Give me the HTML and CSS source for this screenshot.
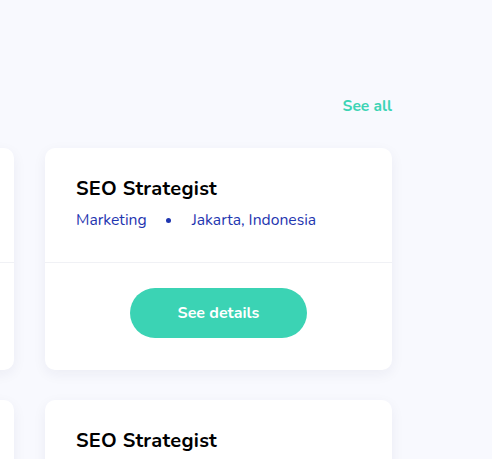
FILE: index.html
```html
<!DOCTYPE html>
<html>
<head>
<meta charset="utf-8">
<link rel="stylesheet" href="styles.css">
</head>
<body>
<section class="jobs">
  <div class="jobs-head">
    <a class="see-all" href="#">See all</a>
  </div>
  <div class="row">
    <div class="card">
      <div class="card-top">
        <h3 class="card-title">SEO Strategist</h3>
        <div class="card-meta"><span>Marketing</span><span class="dot"></span><span>Jakarta, Indonesia</span></div>
      </div>
      <div class="card-bottom"><a class="btn" href="#">See details</a></div>
    </div>
    <div class="card">
      <div class="card-top">
        <h3 class="card-title">SEO Strategist</h3>
        <div class="card-meta"><span>Marketing</span><span class="dot"></span><span>Jakarta, Indonesia</span></div>
      </div>
      <div class="card-bottom"><a class="btn" href="#">See details</a></div>
    </div>
  </div>
  <div class="row">
    <div class="card">
      <div class="card-top">
        <h3 class="card-title">SEO Strategist</h3>
        <div class="card-meta"><span>Marketing</span><span class="dot"></span><span>Jakarta, Indonesia</span></div>
      </div>
      <div class="card-bottom"><a class="btn" href="#">See details</a></div>
    </div>
    <div class="card">
      <div class="card-top">
        <h3 class="card-title">SEO Strategist</h3>
        <div class="card-meta"><span>Marketing</span><span class="dot"></span><span>Jakarta, Indonesia</span></div>
      </div>
      <div class="card-bottom"><a class="btn" href="#">See details</a></div>
    </div>
  </div>
</section>
</body>
</html>
```

FILE: styles.css
```css
html, body {
  margin: 0;
  padding: 0;
  background: #f8f9fe;
  font-family: "Nunito", "Lato", "Open Sans", sans-serif;
  overflow: hidden;
  height: 459px;
}
.jobs {
  padding: 96px 100px 0 0;
  display: flex;
  flex-direction: column;
  gap: 30px;
}
.jobs-head {
  display: flex;
  justify-content: flex-end;
  margin-bottom: 2px;
}
.see-all {
  color: #3dd4b5;
  font-weight: 700;
  font-size: 15.6px;
  line-height: 20px;
  text-decoration: none;
}
.row {
  display: flex;
  justify-content: flex-end;
  gap: 31px;
}
.card {
  flex: 0 0 347px;
  background: #fff;
  border-radius: 10px;
  box-shadow: 0 4px 14px rgba(30, 40, 90, 0.06);
}
.card-top {
  padding: 28px 31px 31px;
  border-bottom: 1px solid #f0f1f5;
}
.card-title {
  margin: 0 0 7px;
  font-size: 20px;
  letter-spacing: 0.25px;
  line-height: 26px;
  font-weight: 700;
  color: #000;
}
.card-meta {
  display: flex;
  align-items: center;
  font-size: 15.7px;
  line-height: 22px;
  color: #1f36b0;
}
.dot {
  width: 5px;
  height: 5px;
  border-radius: 50%;
  background: #1f36b0;
  margin: 1px 21px 0 19px;
}
.card-bottom {
  display: flex;
  justify-content: center;
  padding: 25px 0 32px;
}
.btn {
  width: 177px;
  height: 50px;
  border-radius: 25px;
  background: #3bd3b4;
  color: #fff;
  font-weight: 700;
  font-size: 16px;
  display: flex;
  align-items: center;
  justify-content: center;
  text-decoration: none;
}
```
